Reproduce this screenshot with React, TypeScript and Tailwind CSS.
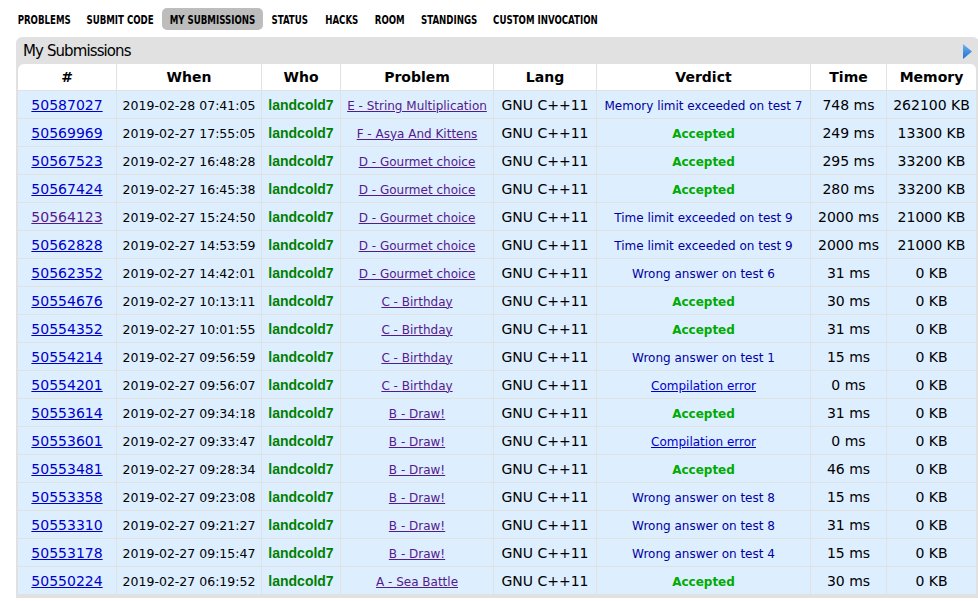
import React from 'react';

type Row = {
  id: string;
  when: string;
  problem: string;
  verdict: string;
  time: string;
  memory: string;
  visited?: boolean;
};

const rows: Row[] = [
  { id: '50587027', when: '2019-02-28 07:41:05', problem: 'E - String Multiplication', verdict: 'Memory limit exceeded on test 7', time: '748 ms', memory: '262100 KB' },
  { id: '50569969', when: '2019-02-27 17:55:05', problem: 'F - Asya And Kittens', verdict: 'Accepted', time: '249 ms', memory: '13300 KB' },
  { id: '50567523', when: '2019-02-27 16:48:28', problem: 'D - Gourmet choice', verdict: 'Accepted', time: '295 ms', memory: '33200 KB' },
  { id: '50567424', when: '2019-02-27 16:45:38', problem: 'D - Gourmet choice', verdict: 'Accepted', time: '280 ms', memory: '33200 KB' },
  { id: '50564123', when: '2019-02-27 15:24:50', problem: 'D - Gourmet choice', verdict: 'Time limit exceeded on test 9', time: '2000 ms', memory: '21000 KB', visited: true },
  { id: '50562828', when: '2019-02-27 14:53:59', problem: 'D - Gourmet choice', verdict: 'Time limit exceeded on test 9', time: '2000 ms', memory: '21000 KB' },
  { id: '50562352', when: '2019-02-27 14:42:01', problem: 'D - Gourmet choice', verdict: 'Wrong answer on test 6', time: '31 ms', memory: '0 KB' },
  { id: '50554676', when: '2019-02-27 10:13:11', problem: 'C - Birthday', verdict: 'Accepted', time: '30 ms', memory: '0 KB' },
  { id: '50554352', when: '2019-02-27 10:01:55', problem: 'C - Birthday', verdict: 'Accepted', time: '31 ms', memory: '0 KB' },
  { id: '50554214', when: '2019-02-27 09:56:59', problem: 'C - Birthday', verdict: 'Wrong answer on test 1', time: '15 ms', memory: '0 KB' },
  { id: '50554201', when: '2019-02-27 09:56:07', problem: 'C - Birthday', verdict: 'Compilation error', time: '0 ms', memory: '0 KB' },
  { id: '50553614', when: '2019-02-27 09:34:18', problem: 'B - Draw!', verdict: 'Accepted', time: '31 ms', memory: '0 KB' },
  { id: '50553601', when: '2019-02-27 09:33:47', problem: 'B - Draw!', verdict: 'Compilation error', time: '0 ms', memory: '0 KB' },
  { id: '50553481', when: '2019-02-27 09:28:34', problem: 'B - Draw!', verdict: 'Accepted', time: '46 ms', memory: '0 KB' },
  { id: '50553358', when: '2019-02-27 09:23:08', problem: 'B - Draw!', verdict: 'Wrong answer on test 8', time: '15 ms', memory: '0 KB' },
  { id: '50553310', when: '2019-02-27 09:21:27', problem: 'B - Draw!', verdict: 'Wrong answer on test 8', time: '31 ms', memory: '0 KB' },
  { id: '50553178', when: '2019-02-27 09:15:47', problem: 'B - Draw!', verdict: 'Wrong answer on test 4', time: '15 ms', memory: '0 KB' },
  { id: '50550224', when: '2019-02-27 06:19:52', problem: 'A - Sea Battle', verdict: 'Accepted', time: '30 ms', memory: '0 KB' },
];

// menu items with the box widths measured from the page
const menu = [
  { label: 'PROBLEMS', w: 'w-[70px]' },
  { label: 'SUBMIT CODE', w: 'w-[83px]' },
  { label: 'MY SUBMISSIONS', w: 'w-[101px]', active: true },
  { label: 'STATUS', w: 'w-[54px]' },
  { label: 'HACKS', w: 'w-[49px]' },
  { label: 'ROOM', w: 'w-[47px]' },
  { label: 'STANDINGS', w: 'w-[73px]' },
  { label: 'CUSTOM INVOCATION', w: 'w-[119px]' },
];

const verdana = "font-['DejaVu_Sans',Verdana,sans-serif]";

function Verdict({ text }: { text: string }) {
  if (text === 'Accepted') {
    return <span className="text-[12px] font-bold text-[#00aa00]">Accepted</span>;
  }
  if (text === 'Compilation error') {
    return <a href="#" className="text-[12px] text-[#0000cc] underline">Compilation error</a>;
  }
  return <span className="text-[12px] text-[#0000a0]">{text}</span>;
}

export default function App() {
  const cell = 'h-[28px] p-0 text-center align-middle border-r border-b border-[#e1e1e1] whitespace-nowrap';
  const head = 'h-[27px] p-0 text-center align-middle border-r border-b border-[#e1e1e1] bg-white';
  const headText = 'text-[14px] font-bold text-black';
  const heads = ['#', 'When', 'Who', 'Problem', 'Lang', 'Verdict', 'Time', 'Memory'];

  return (
    <div className={`w-[978px] h-[601px] overflow-hidden bg-white ${verdana}`}>
      <div className="flex items-center pl-[9px] pt-[8px] h-[30px]">
        {menu.map((m) => (
          <a
            key={m.label}
            href="#"
            className={`${m.w} h-[22px] shrink-0 flex items-center justify-center pt-[2px] rounded-[5px] ${
              m.active ? 'bg-[#bdbdbd]' : ''
            }`}
          >
            <span className="inline-block whitespace-nowrap scale-x-[0.8] text-[12px] font-bold text-black font-['DejaVu_Sans_Condensed','DejaVu_Sans',sans-serif]">
              {m.label}
            </span>
          </a>
        ))}
      </div>

      <div className="ml-[16px] mt-[7px] w-[963px] bg-[#e1e1e1] rounded-tl-[6px] rounded-tr-[6px] px-[2px] pb-[3px]">
        <div className="h-[27px] flex items-center justify-between pl-[5px] pr-[5px] pt-[1px]">
          <span className="text-[15px] tracking-[-0.9px] text-black">My Submissions</span>
          <svg width="9" height="15" viewBox="0 0 9 15">
            <defs>
              <linearGradient id="tri" x1="0" y1="0" x2="0" y2="1">
                <stop offset="0" stopColor="#6fb3f0" />
                <stop offset="1" stopColor="#1f6fd0" />
              </linearGradient>
            </defs>
            <polygon points="0,0 9,7.5 0,15" fill="url(#tri)" />
          </svg>
        </div>

        <table className="table-fixed border-separate border-spacing-0 w-[959px]">
          <colgroup>
            <col className="w-[99px]" />
            <col className="w-[145px]" />
            <col className="w-[79px]" />
            <col className="w-[153px]" />
            <col className="w-[103px]" />
            <col className="w-[214px]" />
            <col className="w-[76px]" />
            <col className="w-[90px]" />
          </colgroup>
          <thead>
            <tr>
              {heads.map((h, i) => (
                <th
                  key={h}
                  className={`${head} ${i === 0 ? 'rounded-tl-[6px]' : ''} ${i === heads.length - 1 ? 'rounded-tr-[6px]' : ''}`}
                >
                  <span className={headText}>{h}</span>
                </th>
              ))}
            </tr>
          </thead>
          <tbody className="bg-[#ddeeff]">
            {rows.map((r) => (
              <tr key={r.id}>
                <td className={cell}>
                  <a href="#" className={`text-[14px] underline ${r.visited ? 'text-[#551a8b]' : 'text-[#0000cc]'}`}>
                    {r.id}
                  </a>
                </td>
                <td className={cell}>
                  <span className="text-[12.5px] text-black">{r.when}</span>
                </td>
                <td className={cell}>
                  <a href="#" className="text-[14px] font-bold text-[#008000] font-['Liberation_Sans',Arial,sans-serif]">
                    landcold7
                  </a>
                </td>
                <td className={cell}>
                  <a href="#" className="text-[12px] underline text-[#551a8b]">{r.problem}</a>
                </td>
                <td className={cell}>
                  <span className="text-[14px] text-black">GNU C++11</span>
                </td>
                <td className={cell}>
                  <Verdict text={r.verdict} />
                </td>
                <td className={cell}>
                  <span className="text-[14px] text-black">{r.time}</span>
                </td>
                <td className={cell}>
                  <span className="text-[14px] text-black">{r.memory}</span>
                </td>
              </tr>
            ))}
          </tbody>
        </table>
      </div>
    </div>
  );
}
